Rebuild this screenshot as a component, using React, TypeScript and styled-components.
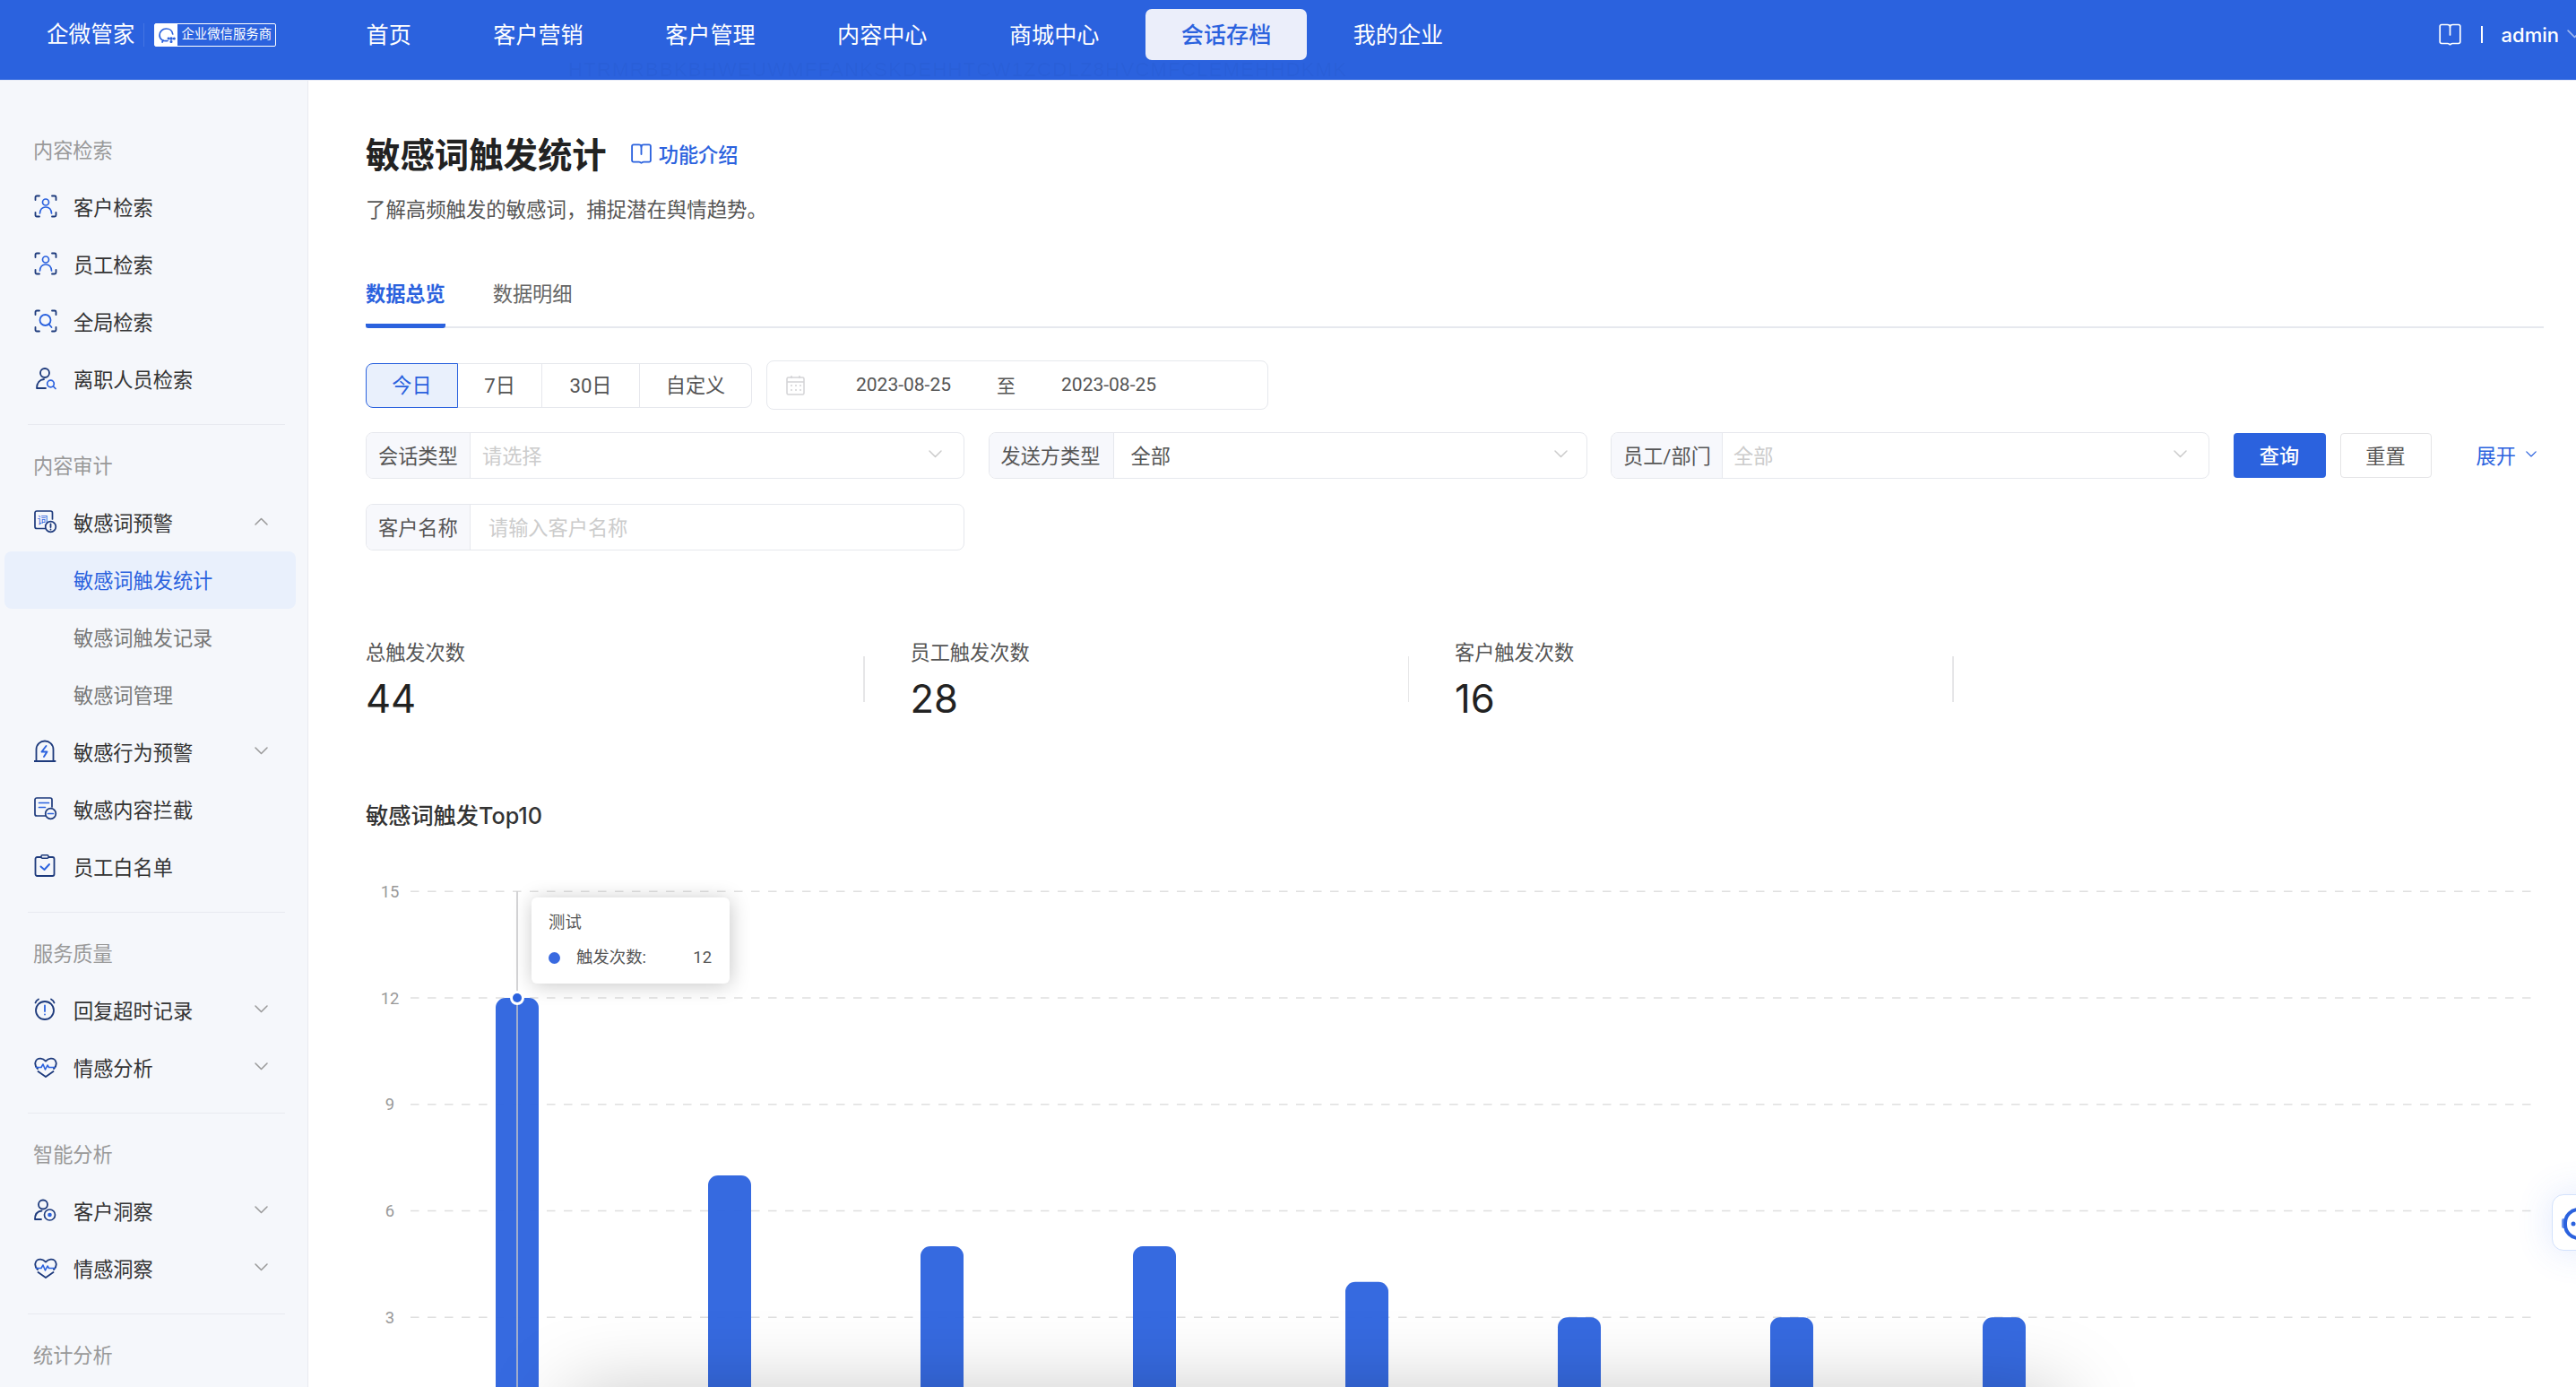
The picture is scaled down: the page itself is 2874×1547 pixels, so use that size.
import React from "react";
import styled, { createGlobalStyle } from "styled-components";

const BLUE = "#2b62de";
const NAVY = "#1d3a7c";
const FONT = `Roboto, "Noto Sans CJK SC", sans-serif`;
const INTER = `Inter, "Noto Sans CJK SC", sans-serif`;

const Global = createGlobalStyle`
  html, body { margin: 0; padding: 0; background: #fff; overflow: hidden; }
  body { font-family: ${FONT}; }
  * { box-sizing: border-box; }
`;

const Page = styled.div`
  position: relative;
  width: 2874px;
  height: 1547px;
  overflow: hidden;
  background: #fff;
  display: flex;
  flex-direction: column;
`;

/* ---------- header ---------- */
const Header = styled.header`
  position: relative;
  flex: none;
  height: 90px;
  padding-bottom: 12px;
  border-bottom: 1px solid #e8ecf6;
  background: ${BLUE};
  display: flex;
  align-items: center;
  color: #fff;
`;
const Brand = styled.div`
  width: 368.6px;
  padding-left: 52px;
  display: flex;
  align-items: center;
`;
const BrandName = styled.span`
  font-size: 24.6px;
  line-height: 36px;
  white-space: nowrap;
`;
const BrandRule = styled.i`
  width: 1px;
  height: 26px;
  margin: 0 11px 0 10px;
  background: rgba(255, 255, 255, 0.12);
`;
const Badge = styled.div`
  width: 136px;
  height: 26px;
  border: 1.5px solid #fff;
  border-radius: 2px;
  display: flex;
  align-items: center;
`;
const BadgeIcon = styled.div`
  width: 25px;
  height: 100%;
  background: #fff;
  display: flex;
  align-items: center;
  justify-content: center;
`;
const BadgeText = styled.span`
  padding-left: 4px;
  font-size: 14.4px;
  line-height: 20px;
  white-space: nowrap;
`;
const Nav = styled.nav`
  display: flex;
  gap: 11.5px;
`;
const NavItem = styled.div<{ $active?: boolean }>`
  height: 57px;
  padding: 0 40px 3px;
  border-radius: 7px;
  display: flex;
  align-items: center;
  font-size: 25.1px;
  white-space: nowrap;
  color: ${(p) => (p.$active ? BLUE : "#fff")};
  background: ${(p) => (p.$active ? "#ebeefa" : "transparent")};
  font-weight: ${(p) => (p.$active ? 500 : 400)};
`;
const HeaderRight = styled.div`
  margin-left: auto;
  margin-right: -7px;
  display: flex;
  align-items: center;
`;
const HeaderRule = styled.i`
  width: 1.5px;
  height: 19px;
  margin: 0 21px 0 22px;
  background: #fff;
`;
const UserName = styled.span`
  font-family: ${INTER};
  font-size: 22px;
  font-weight: 500;
  margin-right: 9px;
`;
const Watermark = styled.span`
  position: absolute;
  left: 634px;
  top: 68px;
  font-family: "Liberation Sans", sans-serif;
  font-size: 22px;
  line-height: 20px;
  letter-spacing: 1.3px;
  white-space: nowrap;
  color: rgba(20, 50, 130, 0.07);
`;

/* ---------- sidebar ---------- */
const Body = styled.div`
  flex: 1;
  min-height: 0;
  display: flex;
`;
const Sidebar = styled.aside`
  flex: none;
  width: 344px;
  padding: 45px 13px 0 5px;
  border-right: 1px solid #e8eaf0;
  background: #f5f7fb;
  overflow: hidden;
`;
const SectionLabel = styled.div`
  height: 64px;
  padding: 0 0 3px 32px;
  display: flex;
  align-items: center;
  font-size: 22.2px;
  color: #999;
`;
const MenuRow = styled.div<{ $active?: boolean; $sub?: boolean }>`
  height: 64px;
  padding: 0 31px 3px ${(p) => (p.$sub ? 77 : 33)}px;
  border-radius: 8px;
  display: flex;
  align-items: center;
  font-size: 22.2px;
  white-space: nowrap;
  color: ${(p) => (p.$active ? BLUE : p.$sub ? "#777" : "#333")};
  background: ${(p) => (p.$active ? "#e9f0fc" : "transparent")};
`;
const MenuIcon = styled.span`
  flex: none;
  width: 26px;
  height: 26px;
  margin-right: 18px;
  display: flex;
`;
const MenuCaret = styled.span`
  margin-left: auto;
  display: flex;
`;
const SideRule = styled.hr`
  margin: 18px 12px 13px 26px;
  height: 1px;
  border: 0;
  background: #e8eaf0;
`;

/* ---------- main ---------- */
const Main = styled.main`
  flex: 1;
  min-width: 0;
  padding: 60px 36px 0 64px;
`;
const TitleRow = styled.div`
  height: 44px;
  display: flex;
  align-items: center;
`;
const Title = styled.h1`
  margin: 4px 0 0;
  font-size: 38.4px;
  line-height: 44px;
  font-weight: 700;
  color: #222;
`;
const IntroLink = styled.a`
  margin-left: 27px;
  padding-bottom: 2px;
  display: flex;
  align-items: center;
  gap: 8px;
  font-size: 22.2px;
  font-weight: 500;
  color: ${BLUE};
`;
const Subtitle = styled.p`
  margin: 25px 0 0;
  font-size: 22.4px;
  line-height: 30px;
  color: #555;
`;
const Tabs = styled.div`
  margin-top: 63px;
  height: 54px;
  display: flex;
  gap: 53px;
  box-shadow: inset 0 -2px 0 #e6e8ee;
`;
const Tab = styled.div<{ $active?: boolean }>`
  height: 54px;
  padding-top: 1px;
  font-size: 22.2px;
  line-height: 30px;
  border-bottom: 5px solid ${(p) => (p.$active ? BLUE : "transparent")};
  border-radius: 0 0 3px 3px;
  color: ${(p) => (p.$active ? BLUE : "#666")};
  font-weight: ${(p) => (p.$active ? 700 : 400)};
`;
const DateRow = styled.div`
  margin-top: 36px;
  height: 55px;
  display: flex;
  align-items: center;
  gap: 16px;
`;
const Segment = styled.div`
  height: 50px;
  display: flex;
`;
const SegmentItem = styled.div<{ $w: number; $active?: boolean }>`
  width: ${(p) => p.$w}px;
  padding-bottom: 3px;
  display: flex;
  align-items: center;
  justify-content: center;
  font-size: 22.2px;
  color: ${(p) => (p.$active ? BLUE : "#555")};
  background: ${(p) => (p.$active ? "#e9f0fc" : "#fff")};
  border: 1.5px solid ${(p) => (p.$active ? BLUE : "#e6e8ed")};
  border-left-width: ${(p) => (p.$active ? 1.5 : 0)}px;
  &:first-child { border-radius: 8px 0 0 8px; }
  &:last-child { border-radius: 0 8px 8px 0; }
`;
const DatePicker = styled.div`
  width: 560px;
  height: 55px;
  padding: 0 0 1px 21px;
  border: 1.5px solid #e6e8ed;
  border-radius: 8px;
  display: flex;
  align-items: center;
  font-size: 21px;
  color: #555;
`;
const DateText = styled.span<{ $gap: number }>`
  margin-left: ${(p) => p.$gap}px;
  font-size: 21px;
`;
const Filters = styled.div`
  margin-top: 25px;
  display: grid;
  grid-template-columns: 668px 668px 668px 1fr;
  column-gap: 26.5px;
  row-gap: 28px;
`;
const Field = styled.div`
  height: 52px;
  border: 1.5px solid #e6e8ed;
  border-radius: 8px;
  display: flex;
  overflow: hidden;
`;
const FieldLabel = styled.div<{ $w: number }>`
  flex: none;
  width: ${(p) => p.$w}px;
  padding: 0 0 3px 13px;
  border-right: 1.5px solid #e6e8ed;
  background: #f7f8fc;
  display: flex;
  align-items: center;
  font-size: 22.2px;
  white-space: nowrap;
  color: #555;
`;
const FieldValue = styled.div<{ $inset: number; $end?: number; $muted?: boolean }>`
  flex: 1;
  padding: 0 ${(p) => p.$end ?? 24}px 3px ${(p) => p.$inset}px;
  display: flex;
  align-items: center;
  justify-content: space-between;
  font-size: 22.2px;
  color: ${(p) => (p.$muted ? "#ccc" : "#555")};
`;
const Actions = styled.div`
  display: flex;
  align-items: center;
  height: 52px;
`;
const Primary = styled.button`
  width: 103px;
  height: 50px;
  padding: 0 0 3px;
  border: 0;
  border-radius: 4px;
  background: ${BLUE};
  color: #fff;
  font: 500 22.2px ${FONT};
`;
const Plain = styled.button`
  width: 102px;
  height: 50px;
  margin-left: 16px;
  padding: 0 0 3px;
  border: 1.5px solid #e4e4e6;
  border-radius: 4px;
  background: #fff;
  color: #555;
  font: 22.2px ${FONT};
`;
const Expand = styled.a`
  margin-left: 50px;
  padding-bottom: 3px;
  display: flex;
  align-items: center;
  gap: 11px;
  font-size: 22.2px;
  color: ${BLUE};
`;
const Stats = styled.div`
  margin-top: 98px;
  display: flex;
`;
const Stat = styled.div`
  width: 555px;
`;
const StatLabel = styled.div`
  padding-top: 1px;
  font-size: 22.2px;
  line-height: 30px;
  color: #555;
`;
const StatValue = styled.div`
  margin-top: 6px;
  font-family: ${INTER};
  font-size: 43.5px;
  line-height: 60px;
  color: #222;
`;
const StatRule = styled.i`
  flex: none;
  width: 1.5px;
  height: 51px;
  margin: 20px 51px 0 0;
  background: #e6e6e8;
`;
const ChartTitle = styled.h2`
  margin: 83px 0 0;
  font-family: ${INTER};
  font-size: 25.2px;
  line-height: 36px;
  font-weight: 500;
  color: #333;
`;
const ChartWrap = styled.div`
  position: relative;
  margin-top: 32px;
  height: 587px;
`;
const ChartSvg = styled.svg`
  display: block;
  overflow: hidden;
`;
const Tooltip = styled.div`
  position: absolute;
  left: 185px;
  top: 41px;
  width: 221px;
  height: 96px;
  padding: 14px 20px 0 19px;
  border-radius: 6px;
  background: #fff;
  box-shadow: 1px 2px 22px rgba(0, 0, 0, 0.22);
  font-size: 18.4px;
  line-height: 28px;
  color: #555;
`;
const TipRow = styled.div`
  margin-top: 11px;
  display: flex;
  align-items: center;
`;
const TipDot = styled.i`
  width: 13px;
  height: 13px;
  margin-right: 18px;
  border-radius: 50%;
  background: #3869e0;
`;
const TipValue = styled.span`
  margin-left: auto;
`;
const BottomShadow = styled.div`
  position: absolute;
  left: 635px;
  top: 1556px;
  width: 1665px;
  height: 80px;
  background: #fff;
  box-shadow: 0 0 90px rgba(0, 0, 0, 0.25);
`;
const FloatTab = styled.div`
  position: absolute;
  left: 2847px;
  top: 1332px;
  width: 60px;
  height: 63px;
  padding: 14px 0 0 10px;
  border: 1.5px solid #d3e2fc;
  border-radius: 13px;
  background: #fff;
  box-shadow: 0 0 40px rgba(60, 110, 240, 0.16);
`;

/* ---------- icons ---------- */
const Chevron = ({ up, color = "#999", w = 15 }: { up?: boolean; color?: string; w?: number }) => (
  <svg width={w} height={w * 0.6} viewBox="0 0 15 9" fill="none">
    <path d={up ? "M1 8l6.5-6.5L14 8" : "M1 1l6.5 6.5L14 1"} stroke={color} strokeWidth="1.5" strokeLinecap="round" strokeLinejoin="round" />
  </svg>
);
const Book = ({ color, size, weight = 1.7 }: { color: string; size: number; weight?: number }) => (
  <svg width={size} height={size} viewBox="0 0 25 25" fill="none" stroke={color} strokeWidth={weight} strokeLinejoin="round" strokeLinecap="round">
    <path d="M3 1.5h6.500c1.500 0 3 .6 3 2.500 0-1.900 1.500-2.500 3-2.500H22A1.800 1.800 0 0 1 23.800 3.300v17.400A1.800 1.800 0 0 1 22 22.500h-6.700c-1.100 0-1.700.5-2.800 1.200-1.100-.7-1.700-1.200-2.800-1.200H3a1.800 1.800 0 0 1-1.800-1.800V3.300A1.800 1.800 0 0 1 3 1.500z" />
    <path d="M12.500 4v9" />
  </svg>
);
const Brackets = () => (
  <path d="M6 1.500H3A1.500 1.500 0 0 0 1.500 3v3M20 1.500h3A1.500 1.500 0 0 1 24.500 3v3M6 24.500H3A1.500 1.500 0 0 1 1.500 23v-3M20 24.500h3a1.500 1.500 0 0 0 1.500-1.500v-3" stroke={NAVY} strokeWidth="1.8" strokeLinecap="round" fill="none" />
);
const Svg: React.FC<{ children: React.ReactNode }> = ({ children }) => (
  <svg width="26" height="26" viewBox="0 0 26 26" fill="none" strokeLinecap="round" strokeLinejoin="round">{children}</svg>
);
const Heart = () => (
  <Svg>
    <path d="M4 15C1.800 12.800 1 11 1.300 8.600 1.700 5.300 4.400 3.300 7.400 3.600c2.300.2 4 1.200 5.600 3 1.600-1.800 3.300-2.800 5.600-3 3-.3 5.700 1.700 6.100 5 .3 2.400-.5 4.200-2.700 6.400" stroke={NAVY} strokeWidth="1.800" />
    <path d="M4.500 18L13 24l8.500-6" stroke={NAVY} strokeWidth="1.800" />
    <path d="M2.500 13.500h5.500l2-3.500 2.500 6 2.500-5 1.500 2.500h6.500" stroke={BLUE} strokeWidth="1.600" />
  </Svg>
);
const icons: Record<string, React.ReactNode> = {
  person: (
    <Svg>
      <Brackets />
      <circle cx="13" cy="8.500" r="3.500" stroke={BLUE} strokeWidth="1.700" />
      <path d="M6.500 21c.3-4.500 3-7 6.500-7s6.200 2.500 6.500 7" stroke={BLUE} strokeWidth="1.700" />
    </Svg>
  ),
  global: (
    <Svg>
      <Brackets />
      <circle cx="12.500" cy="12" r="6" stroke={BLUE} strokeWidth="1.800" />
      <path d="M16.500 16.500l3 3.500" stroke={BLUE} strokeWidth="1.800" />
    </Svg>
  ),
  leave: (
    <Svg>
      <circle cx="12" cy="7" r="5" stroke={NAVY} strokeWidth="1.800" />
      <path d="M3 24c0-6 3.500-9.500 8-10M3 24h10" stroke={NAVY} strokeWidth="1.800" />
      <circle cx="18.500" cy="19" r="3.800" stroke={BLUE} strokeWidth="1.700" />
      <path d="M21.500 22l2.500 2.500" stroke={BLUE} strokeWidth="1.700" />
    </Svg>
  ),
  word: (
    <Svg>
      <path d="M14 20.500H3a2 2 0 0 1-2-2V3a2 2 0 0 1 2-2h15.500a2 2 0 0 1 2 2v7" stroke={NAVY} strokeWidth="1.700" />
      <text x="3.500" y="15.500" fontSize="12" fill={BLUE} fontFamily={FONT}>词</text>
      <circle cx="18.500" cy="18.500" r="5.800" fill="#f5f7fb" stroke={NAVY} strokeWidth="1.700" />
      <path d="M18.500 15.500v3.500M18.500 21.500v.1" stroke={NAVY} strokeWidth="1.800" />
    </Svg>
  ),
  behavior: (
    <Svg>
      <path d="M2.500 23.500V11C2.500 5.500 7 1.500 12 1.500S21.500 5.500 21.500 11v12.500" stroke={NAVY} strokeWidth="1.800" />
      <path d="M.5 24h23" stroke={NAVY} strokeWidth="2" />
      <path d="M13.500 7L8.500 13.500h6l-3.500 5.500" stroke={BLUE} strokeWidth="1.900" />
    </Svg>
  ),
  block: (
    <Svg>
      <path d="M13 21H3a2 2 0 0 1-2-2V3a2 2 0 0 1 2-2h15a2 2 0 0 1 2 2v8" stroke={NAVY} strokeWidth="1.700" />
      <path d="M5.500 6.500h11M5.500 11.500h7" stroke={BLUE} strokeWidth="1.700" />
      <circle cx="18.500" cy="18.500" r="5.800" stroke={NAVY} strokeWidth="1.700" />
      <path d="M15.500 18.500h6" stroke={BLUE} strokeWidth="1.700" />
    </Svg>
  ),
  list: (
    <Svg>
      <rect x="1.500" y="3" width="21" height="21" rx="2" stroke={NAVY} strokeWidth="1.800" />
      <rect x="8" y=".8" width="8" height="3.500" rx="1.200" fill="#f5f7fb" stroke={NAVY} strokeWidth="1.500" />
      <path d="M7.500 13.500l4 3.500 5.500-6" stroke={BLUE} strokeWidth="1.900" />
    </Svg>
  ),
  clock: (
    <Svg>
      <circle cx="12" cy="14" r="10" stroke={NAVY} strokeWidth="1.800" />
      <path d="M1.500 5.500C2 3.500 3 2.500 5 1.500M22.500 5.500C22 3.500 21 2.500 19 1.500" stroke={NAVY} strokeWidth="1.800" />
      <path d="M12 8.500v6.500M12 18.500v.1" stroke={BLUE} strokeWidth="1.800" />
    </Svg>
  ),
  heart: <Heart />,
  insight: (
    <Svg>
      <circle cx="10" cy="6.500" r="5" stroke={NAVY} strokeWidth="1.800" />
      <path d="M1 23c0-5.500 3-9 7.500-9.500M1 23h7" stroke={NAVY} strokeWidth="1.800" />
      <circle cx="17.500" cy="18" r="6" stroke={NAVY} strokeWidth="1.700" />
      <circle cx="17.500" cy="18" r="2.300" fill={BLUE} />
    </Svg>
  ),
};

/* ---------- data ---------- */
type Item = { t: string; i?: string; caret?: "up" | "down"; sub?: boolean; active?: boolean };
const sections: { label: string; items: Item[] }[] = [
  {
    label: "内容检索",
    items: [
      { t: "客户检索", i: "person" },
      { t: "员工检索", i: "person" },
      { t: "全局检索", i: "global" },
      { t: "离职人员检索", i: "leave" },
    ],
  },
  {
    label: "内容审计",
    items: [
      { t: "敏感词预警", i: "word", caret: "up" },
      { t: "敏感词触发统计", sub: true, active: true },
      { t: "敏感词触发记录", sub: true },
      { t: "敏感词管理", sub: true },
      { t: "敏感行为预警", i: "behavior", caret: "down" },
      { t: "敏感内容拦截", i: "block" },
      { t: "员工白名单", i: "list" },
    ],
  },
  {
    label: "服务质量",
    items: [
      { t: "回复超时记录", i: "clock", caret: "down" },
      { t: "情感分析", i: "heart", caret: "down" },
    ],
  },
  {
    label: "智能分析",
    items: [
      { t: "客户洞察", i: "insight", caret: "down" },
      { t: "情感洞察", i: "heart", caret: "down" },
    ],
  },
];
const navItems = ["首页", "客户营销", "客户管理", "内容中心", "商城中心", "会话存档", "我的企业"];
const segments: [string, number][] = [["今日", 103], ["7日", 94], ["30日", 109], ["自定义", 125]];
const stats: [string, string][] = [["总触发次数", "44"], ["员工触发次数", "28"], ["客户触发次数", "16"]];
const barValues = [12, 7, 5, 5, 4, 3, 3, 3];
const ticks = [15, 12, 9, 6, 3];
const BASE = 628;
const UNIT = 39.58;
const yOf = (v: number) => BASE - v * UNIT;

const Chart = () => (
  <ChartSvg width="2430" height="587" viewBox="0 0 2430 587">
    {ticks.map((v) => (
      <g key={v}>
        <text x="27" y={yOf(v) + 6.500} textAnchor="middle" fontSize="18.400" fill="#999" fontFamily={FONT}>{v}</text>
        <line x1="50" x2="2421" y1={yOf(v)} y2={yOf(v)} stroke="#e0e0e0" strokeWidth="1.500" strokeDasharray="9.500 9.500" />
      </g>
    ))}
    {barValues.map((v, i) => {
      const cx = 169 + i * 237;
      const top = yOf(v);
      return (
        <path
          key={i}
          fill={BLUE}
          fillOpacity="0.95"
          d={`M${cx - 24} ${BASE}V${top + 11}a11 11 0 0 1 11-11h26a11 11 0 0 1 11 11V${BASE}z`}
        />
      );
    })}
    <line x1="169" x2="169" y1={yOf(15)} y2={BASE} stroke="#c6c6c8" strokeWidth="1.500" />
    <circle cx="169" cy={yOf(12)} r="8" fill="#fff" />
    <circle cx="169" cy={yOf(12)} r="5" fill={BLUE} />
  </ChartSvg>
);

export default function App() {
  return (
    <Page>
      <Global />
      <Header>
        <Brand>
          <BrandName>企微管家</BrandName>
          <BrandRule />
          <Badge>
            <BadgeIcon>
              <svg width="20" height="20" viewBox="0 0 20 20" fill="none" stroke={BLUE} strokeWidth="1.700" strokeLinecap="round">
                <path d="M11 16.500C6 17.500 2 14.500 2 10.200 2 6 5.300 3 9.500 3c3.800 0 6.800 2.600 7.200 6" />
                <path d="M6 16l-1 2" />
                <circle cx="15" cy="14" r="1" fill={BLUE} />
                <circle cx="18.300" cy="14" r=".7" fill={BLUE} />
                <circle cx="15" cy="17.500" r=".7" fill={BLUE} />
                <circle cx="12" cy="14" r=".6" fill={BLUE} />
              </svg>
            </BadgeIcon>
            <BadgeText>企业微信服务商</BadgeText>
          </Badge>
        </Brand>
        <Nav>
          {navItems.map((n) => (
            <NavItem key={n} $active={n === "会话存档"}>{n}</NavItem>
          ))}
        </Nav>
        <HeaderRight>
          <Book color="#fff" size={25} />
          <HeaderRule />
          <UserName>admin</UserName>
          <Chevron color="rgba(255,255,255,.55)" w={17} />
        </HeaderRight>
        <Watermark>HTRMRBBKBHWEUWMFFANKSKDEHHTCW1ZCDLZ8HVCMFCLEMEHHDKMK</Watermark>
      </Header>

      <Body>
        <Sidebar>
          {sections.map((s) => (
            <React.Fragment key={s.label}>
              <SectionLabel>{s.label}</SectionLabel>
              {s.items.map((it) => (
                <MenuRow key={it.t} $sub={it.sub} $active={it.active}>
                  {it.i && <MenuIcon>{icons[it.i]}</MenuIcon>}
                  {it.t}
                  {it.caret && (
                    <MenuCaret>
                      <Chevron up={it.caret === "up"} />
                    </MenuCaret>
                  )}
                </MenuRow>
              ))}
              <SideRule />
            </React.Fragment>
          ))}
          <SectionLabel>统计分析</SectionLabel>
        </Sidebar>

        <Main>
          <TitleRow>
            <Title>敏感词触发统计</Title>
            <IntroLink>
              <Book color={BLUE} size={23} weight={2} />
              功能介绍
            </IntroLink>
          </TitleRow>
          <Subtitle>了解高频触发的敏感词，捕捉潜在舆情趋势。</Subtitle>

          <Tabs>
            <Tab $active>数据总览</Tab>
            <Tab>数据明细</Tab>
          </Tabs>

          <DateRow>
            <Segment>
              {segments.map(([t, w], i) => (
                <SegmentItem key={t} $w={w} $active={i === 0}>{t}</SegmentItem>
              ))}
            </Segment>
            <DatePicker>
              <svg width="21" height="23" viewBox="0 0 21 23" fill="none" stroke="#d4d4d6" strokeWidth="1.500">
                <rect x="1" y="3" width="19" height="19" rx="1.500" />
                <path d="M1 8h19M6 1v3M15 1v3" />
                <path d="M5 12h2M10 12h2M15 12h2M5 17h2M10 17h2M15 17h2" strokeWidth="1.400" />
              </svg>
              <DateText $gap={57}>2023-08-25</DateText>
              <DateText $gap={51}>至</DateText>
              <DateText $gap={51}>2023-08-25</DateText>
            </DatePicker>
          </DateRow>

          <Filters>
            <Field>
              <FieldLabel $w={116}>会话类型</FieldLabel>
              <FieldValue $inset={13} $muted>
                请选择
                <Chevron color="#ccc" w={15} />
              </FieldValue>
            </Field>
            <Field>
              <FieldLabel $w={139}>发送方类型</FieldLabel>
              <FieldValue $inset={19} $end={21}>
                全部
                <Chevron color="#ccc" w={15} />
              </FieldValue>
            </Field>
            <Field>
              <FieldLabel $w={124}>员工/部门</FieldLabel>
              <FieldValue $inset={12} $muted>
                全部
                <Chevron color="#ccc" w={15} />
              </FieldValue>
            </Field>
            <Actions>
              <Primary>查询</Primary>
              <Plain>重置</Plain>
              <Expand>
                展开
                <Chevron color={BLUE} w={12} />
              </Expand>
            </Actions>
            <Field>
              <FieldLabel $w={116}>客户名称</FieldLabel>
              <FieldValue $inset={20} $muted>请输入客户名称</FieldValue>
            </Field>
          </Filters>

          <Stats>
            {stats.map(([label, value]) => (
              <React.Fragment key={label}>
                <Stat>
                  <StatLabel>{label}</StatLabel>
                  <StatValue>{value}</StatValue>
                </Stat>
                <StatRule />
              </React.Fragment>
            ))}
          </Stats>

          <ChartTitle>敏感词触发Top10</ChartTitle>
          <ChartWrap>
            <Chart />
            <Tooltip>
              测试
              <TipRow>
                <TipDot />
                触发次数:
                <TipValue>12</TipValue>
              </TipRow>
            </Tooltip>
          </ChartWrap>
        </Main>
      </Body>

      <BottomShadow />
      <FloatTab>
        <svg width="50" height="36" viewBox="0 0 50 36" fill="none">
          <rect x="0" y="12" width="5" height="11" rx="2" fill="#6e96ee" />
          <rect x="4" y="2" width="34" height="32" rx="15" stroke={BLUE} strokeWidth="4" />
          <circle cx="13" cy="18" r="2.500" fill={BLUE} />
        </svg>
      </FloatTab>
    </Page>
  );
}
